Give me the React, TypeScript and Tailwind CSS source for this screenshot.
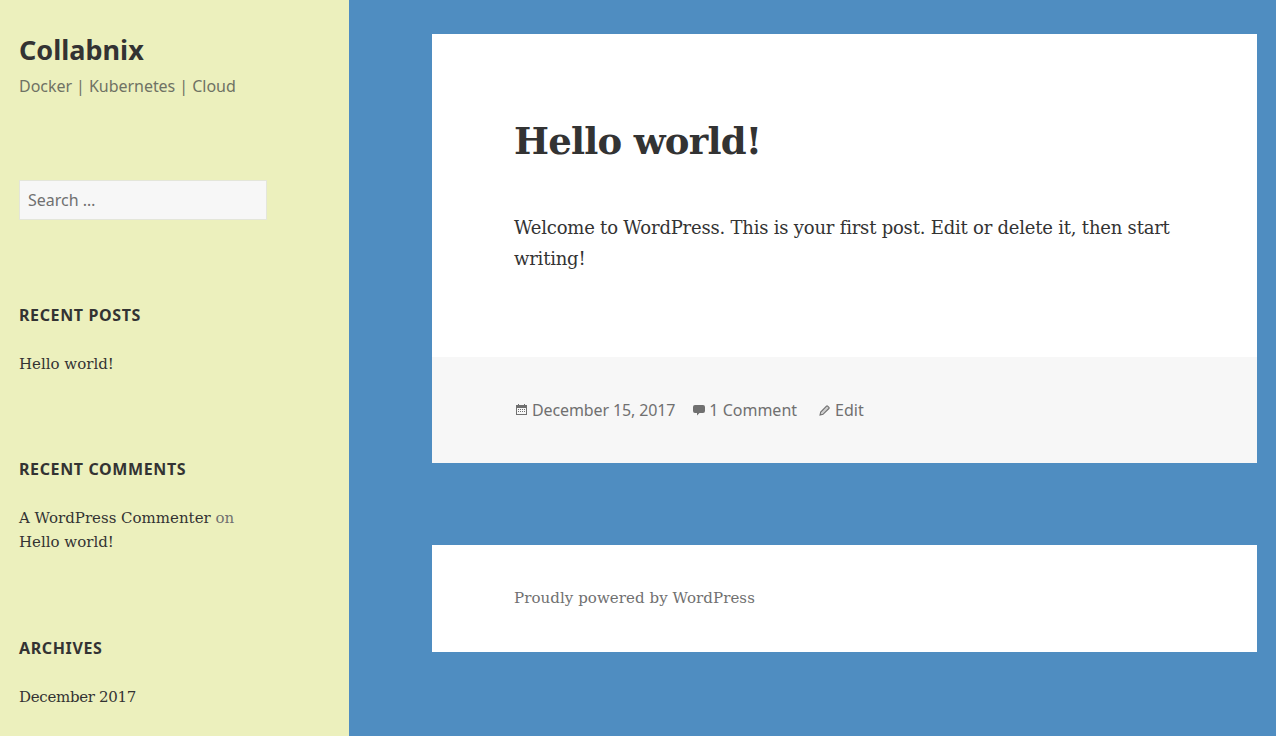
const sans = "font-['Noto_Sans','Open_Sans',sans-serif]";
const serif = "font-['DejaVu_Serif','Liberation_Serif',serif]";

function CalendarIcon() {
	return (
		<svg width="11" height="11" viewBox="0 0 11 11" className="-translate-y-px text-[#707070]">
			<path fill="currentColor" d="M2 0h1v1h5V0h1v1h2v10H0V1h2V0zM1 4v6h9V4H1z" />
			<path fill="currentColor" d="M2 5h1v1H2zM4 5h1v1H4zM6 5h1v1H6zM8 5h1v1H8zM2 7h1v1H2zM4 7h1v1H4zM6 7h1v1H6zM8 7h1v1H8z" />
		</svg>
	);
}

function CommentIcon() {
	return (
		<svg width="12" height="11" viewBox="0 0 12 11" className="text-[#707070]">
			<path fill="currentColor" d="M2 0h8a2 2 0 0 1 2 2v4a2 2 0 0 1-2 2H6.500L4 10.500V8H2a2 2 0 0 1-2-2V2a2 2 0 0 1 2-2z" />
		</svg>
	);
}

function PencilIcon() {
	return (
		<svg width="11" height="11" viewBox="0 0 11 11" className="text-[#707070]">
			<path fill="#cfcfcf" stroke="currentColor" strokeWidth="1.100" d="M1 10l.7-3L7.500 1.100a.8.8 0 0 1 1.100 0l1.300 1.300a.8.8 0 0 1 0 1.100L4 9.300z" />
		</svg>
	);
}

function WidgetTitle({ children }: { children: string }) {
	return <h2 className={`${sans} text-base leading-[24px] font-bold tracking-[0.62px] uppercase text-[#333333]`}>{children}</h2>;
}

export default function App() {
	return (
		<div className="flex w-full h-[736px] overflow-hidden bg-[#4f8dc1]">
			<aside className="w-[349px] shrink-0 bg-[#ecf0bd] pl-[19px] pt-[32px]">
				<h1 className={`${sans} text-[27px] leading-[36px] font-bold text-[#333333]`}>Collabnix</h1>
				<p className={`${sans} mt-[6px] text-base leading-[24px] tracking-[-0.04px] text-[#6f7264]`}>Docker | Kubernetes | Cloud</p>
				<input
					placeholder="Search …"
					className={`${sans} block mt-[82px] w-[248px] h-[40px] px-2 bg-[#f7f7f7] border border-[#e4e6da] text-base text-[#707070] placeholder:text-[#707070] outline-none`}
				/>
				<div className="mt-[83px]">
					<WidgetTitle>Recent Posts</WidgetTitle>
					<p className={`${serif} mt-[25px] text-[15px] leading-[24px] text-[#333333]`}>Hello world!</p>
				</div>
				<div className="mt-[81px]">
					<WidgetTitle>Recent Comments</WidgetTitle>
					<p className={`${serif} mt-[25px] text-[15px] leading-[24px] text-[#333333]`}>
						A WordPress Commenter <span className="text-[#707070]">on</span>
						<br />
						Hello world!
					</p>
				</div>
				<div className="mt-[82px]">
					<WidgetTitle>Archives</WidgetTitle>
					<p className={`${serif} mt-[25px] text-[15px] leading-[24px] tracking-[-0.3px] text-[#333333]`}>December 2017</p>
				</div>
			</aside>
			<main className="flex-1 pl-[83px] pr-[19px] pt-[34px]">
				<article className="bg-white">
					<div className="px-[82px] pt-[83px] pb-[83px]">
						<h1 className={`${serif} text-[37px] leading-[48px] tracking-[-0.75px] font-bold text-[#333333]`}>Hello world!</h1>
						<p className={`${serif} mt-[47px] text-[18px] leading-[31px] tracking-[-0.21px] text-[#333333]`}>
							Welcome to WordPress. This is your first post. Edit or delete it, then start writing!
						</p>
					</div>
					<footer className={`${sans} flex items-center h-[106px] pl-[84px] pr-[82px] bg-[#f7f7f7] text-base text-[#707070]`}>
						<CalendarIcon />
						<span className="ml-[5px] tracking-[-0.12px]">December 15, 2017</span>
						<span className="ml-[18px]"><CommentIcon /></span>
						<span className="ml-[4px]">1 Comment</span>
						<span className="ml-[22px]"><PencilIcon /></span>
						<span className="ml-[5px]">Edit</span>
					</footer>
				</article>
				<footer className={`${serif} mt-[82px] h-[107px] flex items-center px-[82px] bg-white text-[15px] tracking-[0.07px] text-[#707070]`}>
					Proudly powered by WordPress
				</footer>
			</main>
		</div>
	);
}
